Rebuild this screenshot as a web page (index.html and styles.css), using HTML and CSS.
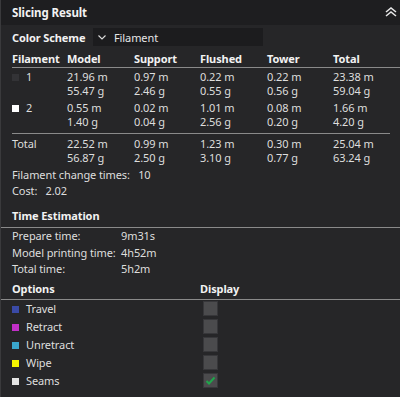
FILE: index.html
```html
<html>
    <head>
        <title>Slicing Result</title>
        <link rel="stylesheet" href="styles.css">
    </head>
    <body>
        <div class="panel">
            <div class="titlebar">
                <span>Slicing Result</span>
                <svg class="collapse" width="12" height="10" viewBox="0 0 12 10">
                    <path d="M1 5 L6 1 L11 5 M1 9 L6 5 L11 9" fill="none" stroke="#e6e6e6" stroke-width="1.6"/>
                </svg>
            </div>
            <div class="scheme">
                <span class="label">Color Scheme</span>
                <div class="combo">
                    <svg width="8" height="5" viewBox="0 0 8 5"><path d="M0.5 0.5 L4 4 L7.5 0.5" fill="none" stroke="#ddd" stroke-width="1.1"/></svg>
                    <span>Filament</span>
                </div>
            </div>
            <div class="grid head">
                <span>Filament</span><span>Model</span><span>Support</span><span>Flushed</span><span>Tower</span><span>Total</span>
            </div>
            <div class="grid row first">
                <span><i class="sw" style="background:#333336"></i>1</span>
                <span>21.96 m<br>55.47 g</span>
                <span>0.97 m<br>2.46 g</span>
                <span>0.22 m<br>0.55 g</span>
                <span>0.22 m<br>0.56 g</span>
                <span>23.38 m<br>59.04 g</span>
            </div>
            <div class="grid row second">
                <span><i class="sw" style="background:#ffffff"></i>2</span>
                <span>0.55 m<br>1.40 g</span>
                <span>0.02 m<br>0.04 g</span>
                <span>1.01 m<br>2.56 g</span>
                <span>0.08 m<br>0.20 g</span>
                <span>1.66 m<br>4.20 g</span>
            </div>
            <div class="grid row total">
                <span>Total</span>
                <span>22.52 m<br>56.87 g</span>
                <span>0.99 m<br>2.50 g</span>
                <span>1.23 m<br>3.10 g</span>
                <span>0.30 m<br>0.77 g</span>
                <span>25.04 m<br>63.24 g</span>
            </div>
            <div class="info">
                <div>Filament change times:&nbsp;&nbsp; 10</div>
                <div>Cost:&nbsp;&nbsp; 2.02</div>
            </div>
            <div class="section">Time Estimation</div>
            <div class="times">
                <div class="trow"><span>Prepare time:</span><span>9m31s</span></div>
                <div class="trow"><span>Model printing time:</span><span>4h52m</span></div>
                <div class="trow"><span>Total time:</span><span>5h2m</span></div>
            </div>
            <div class="section options-head"><span>Options</span><span>Display</span></div>
            <div class="opts">
                <div class="orow"><span><i class="sw" style="background:#3a4aa6"></i>Travel</span><i class="chk"></i></div>
                <div class="orow"><span><i class="sw" style="background:#c22fc8"></i>Retract</span><i class="chk"></i></div>
                <div class="orow"><span><i class="sw" style="background:#3aa6cc"></i>Unretract</span><i class="chk"></i></div>
                <div class="orow"><span><i class="sw" style="background:#f4f400"></i>Wipe</span><i class="chk"></i></div>
                <div class="orow"><span><i class="sw" style="background:#e4e4e4"></i>Seams</span>
                    <i class="chk"><svg width="13" height="13" viewBox="0 0 13 13"><path d="M2.5 7 L5 9.5 L10.5 3.5" fill="none" stroke="#1fa64b" stroke-width="2"/></svg></i>
                </div>
            </div>
        </div>
    </body>
</html>
```

FILE: styles.css
```css
body{
    margin: 0;
    background-color: #262628;
}
.panel{
    width: 400px;
    height: 397px;
    background-color: #262628;
    color: #dedede;
    font-family: "Noto Sans", sans-serif;
    font-size: 11px;
    letter-spacing: -0.1px;
    overflow: hidden;
    border-left: 1px solid #3a3a3c;
    box-sizing: border-box;
}
.titlebar{
    height: 25px;
    background-color: #1e1e20;
    display: flex;
    align-items: center;
    justify-content: space-between;
    padding: 0 3px 0 11px;
    font-weight: bold;
    font-size: 11.5px;
    color: #f2f2f2;
}
.collapse{
    margin-top: -2px;
}
.scheme{
    height: 24px;
    display: flex;
    align-items: center;
    padding-left: 11px;
}
.label{
    font-weight: bold;
    color: #f2f2f2;
    width: 81px;
}
.combo{
    width: 170px;
    height: 18px;
    background-color: #1c1c1e;
    display: flex;
    align-items: center;
    padding-left: 5px;
    box-sizing: border-box;
    gap: 8px;
    color: #e6e6e6;
}
.grid{
    display: grid;
    grid-template-columns: 55px 67px 66px 67px 66px 1fr;
    margin-left: 11px;
}
.head{
    height: 18px;
    align-items: center;
    font-weight: bold;
    color: #f2f2f2;
    border-bottom: 1px solid #8a8a8a;
}
.row{
    line-height: 14px;
}
.first{
    padding-top: 2px;
}
.second{
    padding-top: 3px;
    padding-bottom: 4px;
    border-bottom: 1px solid #8a8a8a;
    margin-right: 10px;
}
.total{
    padding-top: 3px;
}
.sw{
    display: inline-block;
    width: 7px;
    height: 7px;
    margin-right: 7px;
    vertical-align: 0px;
}
.info{
    margin-top: 2px;
    padding-left: 11px;
    line-height: 16px;
}
.section{
    margin-top: 6px;
    height: 22px;
    line-height: 22px;
    padding-left: 11px;
    font-weight: bold;
    color: #f2f2f2;
    border-bottom: 1px solid #8a8a8a;
}
.times{
    padding-left: 11px;
    line-height: 16.5px;
}
.trow{
    display: flex;
}
.trow span:first-child{
    width: 109px;
}
.options-head{
    margin-top: 0;
    height: 21px;
    line-height: 21px;
    display: flex;
}
.options-head span:first-child{
    width: 188px;
}
.opts{
    padding-left: 11px;
}
.orow{
    height: 18px;
    display: flex;
    align-items: center;
}
.orow span{
    width: 192px;
}
.chk{
    display: block;
    width: 13px;
    height: 13px;
    background-color: #4b4b4d;
    box-shadow: 0 0 0 1px #37373a;
}
```
